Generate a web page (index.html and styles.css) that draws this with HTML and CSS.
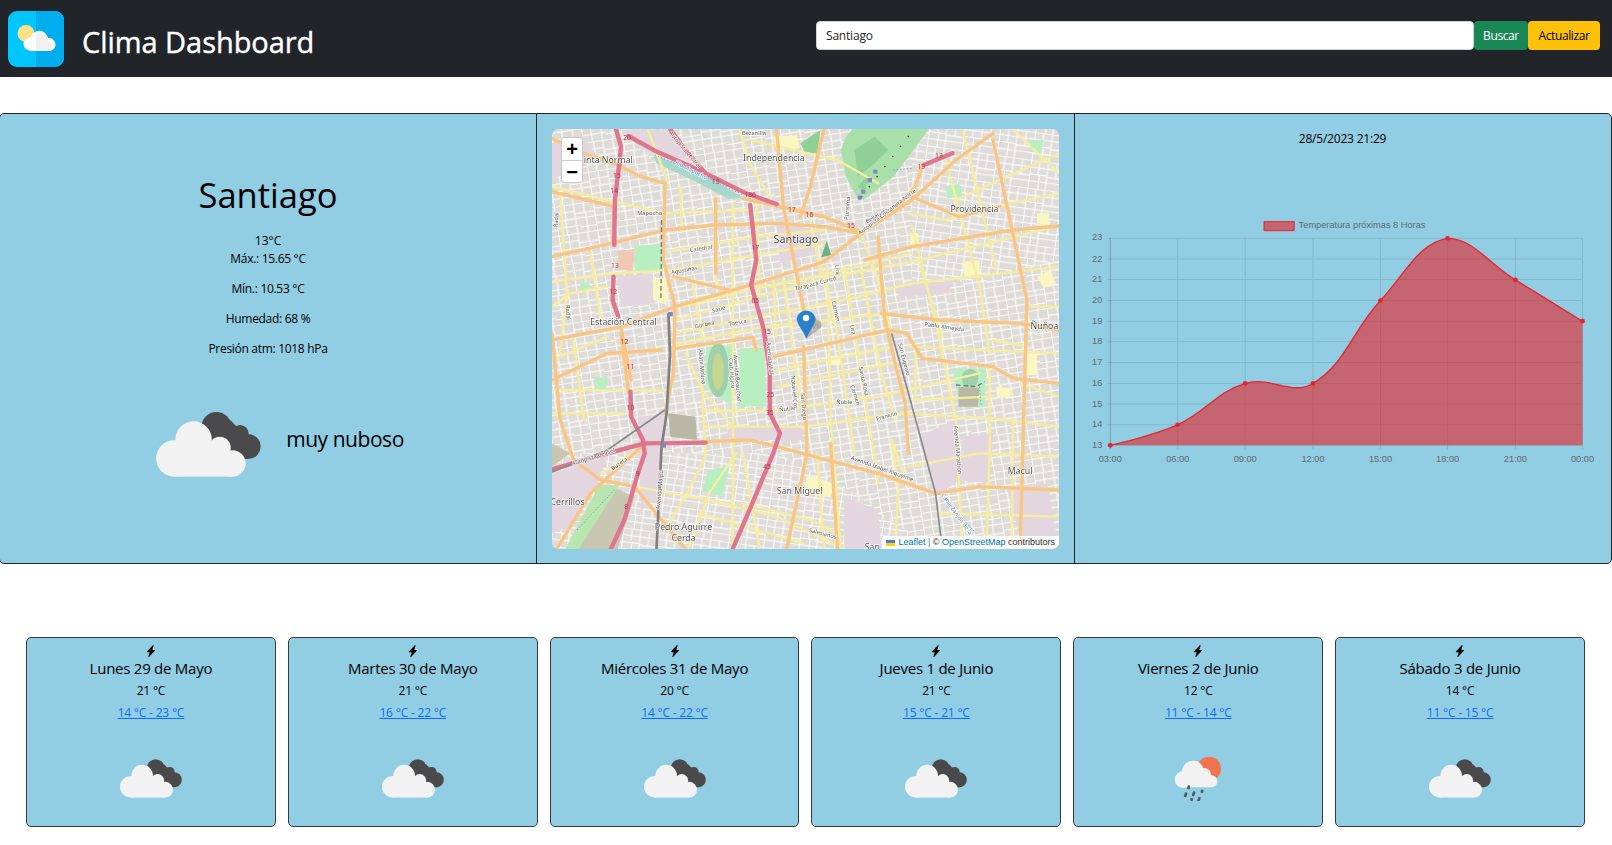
FILE: index.html
```html
<!DOCTYPE html>
<html lang="es">
<head>
<meta charset="utf-8">
<title>Clima Dashboard</title>
<link rel="stylesheet" href="styles.css">
</head>
<body>
<svg class="defs" width="0" height="0" aria-hidden="true">
  <symbol id="clouds" viewBox="170 785 316 196">
    <g class="c-dark">
      <circle cx="352" cy="830" r="45"/><circle cx="423" cy="850" r="26"/><circle cx="447" cy="889" r="38"/>
      <path d="M330 850L395 810L440 860L447 927L360 927Z"/>
    </g>
    <g class="c-light">
      <circle cx="225" cy="925" r="55"/><circle cx="283" cy="868" r="55"/><circle cx="362" cy="893" r="33"/><circle cx="400" cy="940" r="40"/>
      <rect x="225" y="925" width="175" height="55"/><rect x="280" y="880" width="90" height="60"/>
    </g>
  </symbol>
  <symbol id="rain" viewBox="100 72 150 136">
    <circle class="c-sun" cx="208" cy="112" r="36"/>
    <g class="c-light">
      <circle cx="130" cy="145" r="25"/><circle cx="160" cy="121" r="33"/><circle cx="194" cy="130" r="20"/><circle cx="215" cy="150" r="18"/>
      <rect x="130" y="130" width="85" height="38"/>
    </g>
    <g class="c-drop">
      <rect x="143" y="162" width="8" height="12" rx="3" transform="rotate(15 147 168)"/>
      <rect x="134" y="183" width="8" height="15" rx="3" transform="rotate(18 138 190)"/>
      <rect x="158" y="180" width="8" height="15" rx="3" transform="rotate(18 162 187)"/>
      <rect x="183" y="175" width="8" height="10" rx="3" transform="rotate(18 187 180)"/>
      <rect x="152" y="200" width="8" height="9" rx="3"/>
      <rect x="174" y="197" width="8" height="15" rx="3" transform="rotate(18 178 204)"/>
    </g>
  </symbol>
  <symbol id="bolt" viewBox="0 0 16 16">
    <path d="M11.251.068a.5.5 0 0 1 .227.58L9.677 6.5H13a.5.5 0 0 1 .364.843l-8 8.5a.5.5 0 0 1-.842-.49L6.323 9.5H3a.5.5 0 0 1-.364-.843l8-8.5a.5.5 0 0 1 .615-.09z"/>
  </symbol>
</svg>

<header class="navbar">
  <div class="brand">
    <svg class="logo" viewBox="0 0 56 56" aria-hidden="true">
      <rect class="logo-l" width="56" height="56" rx="9"/>
      <path class="logo-r" d="M28 0H47a9 9 0 0 1 9 9V47a9 9 0 0 1-9 9H28Z"/>
      <circle class="logo-sun" cx="18" cy="22.500" r="8.500"/>
      <g class="logo-cloud"><circle cx="22" cy="33" r="6.500"/><circle cx="31" cy="29" r="9"/><circle cx="41" cy="33.500" r="6.500"/><rect x="22" y="30" width="19" height="10"/></g>
      <path class="logo-cloud2" d="M28 20.200A9 9 0 0 1 40 29 6.500 6.500 0 0 1 41 40H28Z"/>
    </svg>
    <h1 class="brand-title">Clima Dashboard</h1>
  </div>
  <form class="search">
    <input class="search-input" type="text" value="Santiago">
    <button class="btn btn-green" type="button">Buscar</button>
    <button class="btn btn-yellow" type="button">Actualizar</button>
  </form>
</header>

<main>
<section class="hero">
  <div class="col col-now">
    <h2 class="city">Santiago</h2>
    <div class="now-line">13°C</div>
    <p class="now-p">Máx.: 15.65 °C</p>
    <p class="now-p">Mín.: 10.53 °C</p>
    <p class="now-p">Humedad: 68 %</p>
    <p class="now-p">Presión atm: 1018 hPa</p>
    <div class="now-sky">
      <svg class="sky-icon" aria-hidden="true"><use href="#clouds"/></svg>
      <span class="sky-text">muy nuboso</span>
    </div>
  </div>

  <div class="col col-map">
    <div class="map">
      <svg class="map-svg" viewBox="36 27 1499 1260" preserveAspectRatio="none" aria-hidden="true">
        <defs>
          <pattern id="st1" width="116" height="88" patternUnits="userSpaceOnUse" patternTransform="rotate(-9)">
            <rect width="116" height="88" fill="#dfdcd8"/>
            <path d="M0 1H116M0 23H58M58 30H116M0 45H116M0 67H70M70 72H116M1 0V88M30 0V45M28 45V88M58 0V88M87 0V30M90 30V88" stroke="#fff" stroke-width="3" fill="none"/>
          </pattern>
          <pattern id="st2" width="104" height="84" patternUnits="userSpaceOnUse" patternTransform="rotate(8)">
            <rect width="104" height="84" fill="#e0dcd9"/>
            <path d="M0 1H104M0 21H104M0 42H52M52 46H104M0 63H104M1 0V84M26 0V42M52 0V84M78 0V46M30 42V84" stroke="#fff" stroke-width="3" fill="none"/>
          </pattern>
        </defs>
        <rect x="36" y="27" width="1499" height="1260" fill="url(#st1)"/>
        <path d="M36 1000H700L900 1100L1160 1287H36Z" fill="url(#st2)"/>
        <path d="M1100 27H1535V420L1100 520Z" fill="url(#st2)"/>

        <g class="lu-lilac">
          <path d="M250 30L390 30L440 120L300 90Z"/><path d="M36 1060L200 1010L170 1090L90 1220L36 1240Z"/>
          <path d="M290 890L370 880L350 1130L300 1170Z"/><path d="M1120 950L1230 900L1240 1080L1170 1130Z"/>
          <path d="M1250 950L1340 940L1330 1090L1240 1080Z"/><path d="M900 1130L1000 1170L1010 1287H900Z"/>
          <path d="M700 310L830 330L820 400L710 430Z"/><path d="M560 920L770 915L780 960L550 960Z"/>
          <path d="M1380 1100L1500 1090L1535 1287H1430Z"/><path d="M36 70L120 40L170 110L36 180Z"/>
          <path d="M1060 500L1230 480L1200 520L1060 530Z"/><path d="M230 470L330 460L340 550L240 560Z"/>
        </g>
        <g class="lu-park">
          <path d="M280 378L362 372L365 450L280 452Z"/><path d="M590 685L663 683L668 858L590 860Z"/>
          <path d="M1222 745L1320 748L1315 860H1240Z"/><path d="M490 680L568 678L566 858L490 800Z"/>
          <path d="M500 1050L560 1040L540 1130L480 1110Z"/><path d="M160 775L200 770L195 810L165 815Z"/>
          <path d="M1200 200L1240 190L1250 230L1205 235Z"/><path d="M1450 60L1490 60L1480 100L1450 95Z"/>
          <path d="M1260 440L1285 440L1280 470L1262 470Z"/><path d="M120 490L145 485L145 510L120 510Z"/>
        </g>
        <path class="lu-forest" d="M890 90L905 50L925 27L1150 27L1090 110L1045 170L960 238L940 235L905 170Z"/>
        <path class="lu-forest2" d="M930 90L990 50L1030 90L990 130L940 170ZM940 200L975 160L960 215ZM770 70L830 30L820 100L785 100Z"/>
        <path class="lu-peach" d="M232 392L280 388L276 452L232 450Z"/>
        <path class="lu-cream" d="M335 470L375 478L376 555L335 540ZM790 1065L870 1092L860 1132L780 1120ZM690 50L760 45L770 85L700 90ZM1250 425L1300 420L1300 470L1255 470ZM1470 470L1510 450L1525 490L1490 505ZM1095 340L1120 340L1118 375L1095 375ZM1470 280L1505 280L1505 315L1470 315ZM860 710L890 710L890 735L860 735ZM1350 800L1395 805L1390 835L1350 830ZM1440 700L1470 700L1470 765L1440 765Z"/>
        <ellipse class="lu-track" cx="527" cy="750" rx="32" ry="82"/>
        <ellipse class="lu-track2" cx="527" cy="755" rx="17" ry="55"/>
        <ellipse class="lu-track" cx="1272" cy="775" rx="25" ry="28"/>
        <path class="lu-grey" d="M1238 800L1300 805L1295 860L1238 860ZM380 880L460 890L465 960L385 950Z"/>
        <path class="lu-tan" d="M36 970L90 1000L36 1040ZM205 1095L280 1130L230 1287H110Z"/>
        <path class="lu-green2" d="M175 1095L235 1095L115 1287L75 1287Z"/>
        <path class="lu-water" d="M335 105L480 160L600 232L560 238L450 180L345 130Z"/>
        <path class="lu-tri" d="M848 362L862 405L832 412Z"/>

        <g class="rd rd-y">
          <path d="M36 485L220 460L380 452L640 405L840 372"/>
          <path d="M400 600L640 530L880 468L1100 425L1535 318"/>
          <path d="M400 640L640 590L900 540L1100 490L1320 465L1535 440"/>
          <path d="M400 672L650 622L1030 580"/>
          <path d="M40 810L370 812"/><path d="M480 872L700 872L1000 830L1300 760"/>
          <path d="M490 920L780 920L1060 880L1340 895L1535 920"/>
          <path d="M280 1100L500 1140L700 1190L900 1287"/><path d="M36 200L200 240L370 280L620 270"/>
          <path d="M380 395L640 350L840 330"/><path d="M1090 1040L1300 1000L1535 1010"/>
          <path d="M1180 1180L1535 1190"/><path d="M36 560L90 520L200 500"/><path d="M620 60L880 120L1000 190"/>
          <path d="M590 27L620 130L680 230"/><path d="M520 230L520 480L545 520"/><path d="M570 250L572 1000L570 1287"/>
          <path d="M415 200L420 330"/><path d="M60 220L80 520L60 700"/><path d="M850 440L860 900L890 1287"/>
          <path d="M900 440L980 950L1000 1090"/><path d="M720 480L750 700L780 900"/><path d="M1100 320L1170 600L1230 900L1250 1287"/>
          <path d="M1330 740L1330 1000L1320 1287"/><path d="M1200 120L1300 500L1330 700"/><path d="M430 700L480 810L570 920"/>
          <path d="M480 800L490 1010L430 1130L370 1230"/><path d="M580 1000L500 1120L440 1287"/><path d="M1040 960L1060 1100L1050 1287"/>
          <path d="M950 340L1000 480L1040 640"/><path d="M1535 830L1420 790"/><path d="M1090 1100L1040 960"/>
          <path d="M640 240L650 530"/><path d="M800 300L830 460"/><path d="M320 30L380 190"/><path d="M180 1060L290 990"/>
          <path d="M600 1150L800 1200L880 1240"/><path d="M1110 700L1110 830"/><path d="M1400 30L1535 160"/>
          <path d="M1090 280L1200 300L1390 250L1535 220"/><path d="M1535 100L1380 170L1230 240"/>
          <path d="M680 500L900 450L1100 400"/><path d="M420 560L640 505L800 470"/><path d="M700 750L1000 690L1040 680"/>
          <path d="M700 800L1040 730"/><path d="M1090 680L1535 700"/><path d="M1100 840L1340 830"/>
          <path d="M36 720L200 650"/><path d="M36 880L250 880"/><path d="M830 430L880 640L930 1000"/>
          <path d="M950 450L1010 760L1050 900"/><path d="M690 470L700 650"/><path d="M450 480L480 660"/>
          <path d="M1250 30L1350 450"/><path d="M1120 420L1190 650"/><path d="M1400 900L1395 1287"/>
          <path d="M600 1000L650 1287"/><path d="M820 1000L840 1287"/><path d="M470 1180L780 1270"/>
          <path d="M1450 560L1535 560"/><path d="M1340 660L1440 680"/><path d="M100 660L130 900"/><path d="M150 400L180 600"/>
        </g>
        <g class="rd rd-o">
          <path d="M36 660L240 620L400 560L640 490L840 425L950 340L1100 240L1230 120L1340 40"/>
          <path d="M36 410L210 370L370 330L520 315L700 310L840 320L950 340"/>
          <path d="M36 215L220 260"/><path d="M370 190L365 420L400 560L395 760L370 880"/>
          <path d="M220 260L215 370"/><path d="M240 620L270 780"/><path d="M36 780L200 700L360 690"/>
          <path d="M400 685L630 652L640 690"/><path d="M690 710L1030 630L1085 640L1130 715L1340 740L1400 775L1535 790"/>
          <path d="M1010 580L1180 600L1420 610L1535 630"/><path d="M960 420L1100 380L1400 330L1535 318"/>
          <path d="M700 27L720 260L790 620"/><path d="M840 27L800 200L770 290"/><path d="M780 680L790 1000L730 1287"/>
          <path d="M1000 350L1020 600L1080 850L1090 1000"/><path d="M1340 60L1440 540L1420 1287"/>
          <path d="M700 980L1000 1060L1170 1120L1300 1100L1535 1110"/><path d="M480 965L620 960L700 980"/>
          <path d="M36 640L60 900L100 1020L180 1080L280 1100L430 1287"/><path d="M300 980L150 1120L50 1287"/>
          <path d="M860 970L880 1287"/><path d="M1100 230L1240 290L1360 260"/>
          <path d="M520 235L520 460"/><path d="M395 470L560 510"/><path d="M600 235L840 290L950 335"/>
          <path d="M36 55L100 90L220 130L300 170L370 190"/><path d="M240 640L262 815"/>
          <path d="M1130 140L1110 200L1040 280L960 330"/>
        </g>
        <g class="rd rd-p">
          <path d="M225 27L240 80L235 130L222 240L220 375"/><path d="M218 470L215 540L232 590"/>
          <path d="M268 815L270 890L305 960L310 1000L290 1060L250 1200L210 1287"/>
          <path d="M262 48L340 92L470 150L610 220L700 252"/><path d="M385 27L430 90L490 160"/>
          <path d="M622 255L640 420L625 495L660 620L680 750L680 880L710 940L690 1000L620 1170L570 1287"/>
          <path d="M36 1048L200 1000L310 970L490 968"/><path d="M1135 135L1220 100"/>
        </g>
        <path class="rail" d="M380 580L385 700L375 880L360 980L345 1287"/>
        <path class="rail2" d="M1040 640L1090 820L1170 1120L1190 1287"/>
        <path class="rail2" d="M36 1056L200 990L370 870"/>
        <path class="rail3" d="M360 300L358 540"/><path class="rail3" d="M1230 795L1290 800L1315 785"/><path class="rail-d" d="M950 232L1100 35"/>
        <path class="water-line" d="M340 105L480 165L600 225M1045 150L1100 145M1300 800L1305 860M1180 1120L1290 1240M110 1230L220 1110"/>
        <g class="station"><rect x="940" y="227" width="12" height="12"/><rect x="950" y="209" width="12" height="12"/><rect x="969" y="174" width="13" height="13"/><rect x="986" y="149" width="12" height="12"/><rect x="380" y="576" width="13" height="13"/><rect x="360" y="970" width="13" height="13"/></g>

        <g class="lb lb-place">
          <text x="130" y="129">inta Normal</text><text x="692" y="122" class="mid">Independencia</text><text x="1285" y="277" class="mid">Providencia</text>
          <text x="247" y="614" class="mid">Estación Central</text><text x="1492" y="626" class="mid">Ñuñoa</text><text x="768" y="1122" class="mid">San Miguel</text>
          <text x="1420" y="1062" class="mid">Macul</text><text x="82" y="1155" class="mid">Cerrillos</text><text x="425" y="1229" class="mid">Pedro Aguirre</text>
          <text x="425" y="1264" class="mid">Cerda</text><text x="983" y="1290" class="mid">San</text>
          <text x="757" y="368" class="mid lb-big">Santiago</text>
        </g>
        <g class="lb lb-road">
          <text x="633" y="46" class="mid">Bezanilla</text><text x="325" y="286" class="mid">Mapocho</text>
          <text transform="translate(477 391) rotate(-8)" class="mid">Catedral</text><text transform="translate(428 456) rotate(-10)" class="mid">Agustinas</text>
          <text transform="translate(530 573) rotate(-15)" class="mid">Sazie</text><text transform="translate(488 619) rotate(-12)" class="mid">Gorbea</text>
          <text transform="translate(586 613) rotate(-10)" class="mid">Toesca</text><text transform="translate(817 496) rotate(-15)" class="mid">Tarapacá Curicó</text>
          <text transform="translate(875 450) rotate(85)" class="mid">Lira</text><text transform="translate(870 575) rotate(78)" class="mid">Carmen</text>
          <text transform="translate(920 630) rotate(80)" class="mid">Lira</text><text transform="translate(952 785) rotate(78)" class="mid">Santa Rosa</text>
          <text transform="translate(927 827) rotate(72)" class="mid">Carmen</text><text transform="translate(1072 720) rotate(75)" class="mid">San Eugenio</text>
          <text transform="translate(675 715) rotate(85)" class="mid">Avenida Vial</text><text transform="translate(747 817) rotate(85)" class="mid">Nataniel Cox</text>
          <text transform="translate(775 860) rotate(85)" class="mid">San Diego</text><text transform="translate(732 872) rotate(-8)" class="mid">Ñuble</text>
          <text x="900" y="852" class="mid">Ñuble</text><text transform="translate(1027 894) rotate(-15)" class="mid">Franklin</text>
          <text transform="translate(1195 626) rotate(8)" class="mid">Pablo Almeyda</text><text transform="translate(1010 1051) rotate(20)" class="mid">Avenida Isabel Riquelme</text>
          <text transform="translate(1230 990) rotate(85)" class="mid">Avenida Marathon</text><text transform="translate(160 1016) rotate(-18)" class="mid">Autopista del Sol</text>
          <text transform="translate(238 1036) rotate(-35)" class="mid">Buzeta</text><text transform="translate(360 1110) rotate(-85)" class="mid">Avenida Maipú</text>
          <text transform="translate(562 760) rotate(85)" class="mid">Club Hípico</text><text transform="translate(578 775) rotate(85)" class="mid">Avenida Beauchef</text>
          <text transform="translate(474 740) rotate(85)" class="mid">Abate Molina</text><text transform="translate(835 1246) rotate(15)" class="mid">Salesianos</text>
          <text transform="translate(915 265) rotate(-85)" class="mid">Purísima</text><text transform="translate(1000 292) rotate(-30)" class="mid">Bellavista</text>
          <text transform="translate(1030 280) rotate(-38)" class="mid">Autopista Costanera Norte</text><text transform="translate(54 300) rotate(-85)" class="mid">Radal</text>
          <text transform="translate(78 578) rotate(85)" class="mid">Radal</text><text transform="translate(425 92) rotate(50)" class="mid lb-pk">Autopista Central</text>
          <text transform="translate(445 155) rotate(27)" class="mid lb-blue">Río Mapocho</text><text transform="translate(1228 1185) rotate(55)" class="mid lb-blue">Canal Zanjón de la</text>
        </g>
        <g class="lb lb-num">
          <text x="258" y="60">20</text><text x="228" y="175">15</text><text x="220" y="218">14</text><text x="222" y="443">13</text><text x="217" y="521">12</text>
          <text x="250" y="671">12</text><text x="268" y="746">11</text><text x="268" y="871">10</text><text x="290" y="1069">9</text><text x="255" y="1166">8</text>
          <text x="520" y="191">19</text><text x="622" y="231">186</text><text x="745" y="276">17</text><text x="797" y="291">16</text><text x="920" y="324">15</text>
          <text x="1180" y="114">13</text><text x="1128" y="146">13</text><text x="637" y="391">17</text><text x="637" y="549">05</text><text x="672" y="643">15</text>
          <text x="682" y="831">25</text><text x="680" y="886">35</text><text x="672" y="1046">45</text>
        </g>
        <path class="pin-shadow" d="M788 655L830 625A16 14 0 0 0 800 605Z"/>
        <path class="pin" d="M788 655C775 625 760 612 760 595A28 28 0 0 1 815 595C815 612 800 625 788 655Z"/>
        <circle class="pin-dot" cx="787" cy="594" r="9.500"/>
      </svg>
      <div class="zoomctl">
        <span class="zoom-btn zoom-top">+</span>
        <span class="zoom-btn">−</span>
      </div>
      <div class="attrib">
        <svg class="flag" viewBox="0 0 12 8" aria-hidden="true"><rect class="flag-b" width="12" height="4"/><rect class="flag-y" y="4" width="12" height="4"/></svg>
        <a class="attr-link" href="#">Leaflet</a> <span class="attr-sep">|</span> © <a class="attr-link" href="#">OpenStreetMap</a> contributors
      </div>
    </div>
  </div>

  <div class="col col-chart">
    <div class="stamp">28/5/2023 21:29</div>
    <svg class="chart" viewBox="0 290 1568 760" preserveAspectRatio="none" role="img" aria-label="Temperatura próximas 8 Horas">
      <rect class="legend-box" x="552" y="304" width="88" height="27"/>
      <text class="ch-text" x="653" y="324">Temperatura próximas 8 Horas</text>
      <path class="grid" d="M94 976H1482M94 914H1482M94 852H1482M94 790H1482M94 727H1482M94 665H1482M94 603H1482M94 541H1482M94 478H1482M94 416H1482M94 354H1482M300 354V988M497 354V988M695 354V988M892 354V988M1088 354V988M1286 354V988M1482 354V988"/>
      <path class="grid-zero" d="M103 354V988"/>
      <path class="area" d="M103 976C103 976 226 949 300 914C383.500 874.600 411.700 816.800 497 790C569.700 767.200 634.200 828.300 695 790C792.200 728.700 807.100 635.200 892 541C964.300 460.800 1003.500 367.300 1088 354C1161 354 1207 429 1286 479C1365 529 1482 603 1482 603V976Z"/>
      <path class="line" d="M103 976C103 976 226 949 300 914C383.500 874.600 411.700 816.800 497 790C569.700 767.200 634.200 828.300 695 790C792.200 728.700 807.100 635.200 892 541C964.300 460.800 1003.500 367.300 1088 354C1161 354 1207 429 1286 479C1365 529 1482 603 1482 603"/>
      <g class="pts"><circle cx="103" cy="976" r="7"/><circle cx="300" cy="914" r="7"/><circle cx="497" cy="790" r="7"/><circle cx="695" cy="790" r="7"/><circle cx="892" cy="541" r="7"/><circle cx="1088" cy="354" r="7"/><circle cx="1286" cy="479" r="7"/><circle cx="1482" cy="603" r="7"/></g>
      <g class="ch-text ch-y">
        <text x="80" y="984">13</text><text x="80" y="922">14</text><text x="80" y="860">15</text><text x="80" y="798">16</text><text x="80" y="735">17</text><text x="80" y="673">18</text><text x="80" y="611">19</text><text x="80" y="549">20</text><text x="80" y="486">21</text><text x="80" y="424">22</text><text x="80" y="360">23</text>
      </g>
      <g class="ch-text ch-x">
        <text x="103" y="1025">03:00</text><text x="300" y="1025">06:00</text><text x="497" y="1025">09:00</text><text x="695" y="1025">12:00</text><text x="892" y="1025">15:00</text><text x="1088" y="1025">18:00</text><text x="1286" y="1025">21:00</text><text x="1482" y="1025">00:00</text>
      </g>
    </svg>
  </div>
</section>

<section class="days">
  <article class="day">
    <svg class="bolt" aria-hidden="true"><use href="#bolt"/></svg>
    <h3 class="day-title">Lunes 29 de Mayo</h3>
    <p class="day-temp">21 °C</p>
    <a class="day-range" href="#">14 °C - 23 °C</a>
    <div class="day-icon"><svg class="ic-cloud" aria-hidden="true"><use href="#clouds"/></svg></div>
  </article>
  <article class="day">
    <svg class="bolt" aria-hidden="true"><use href="#bolt"/></svg>
    <h3 class="day-title">Martes 30 de Mayo</h3>
    <p class="day-temp">21 °C</p>
    <a class="day-range" href="#">16 °C - 22 °C</a>
    <div class="day-icon"><svg class="ic-cloud" aria-hidden="true"><use href="#clouds"/></svg></div>
  </article>
  <article class="day">
    <svg class="bolt" aria-hidden="true"><use href="#bolt"/></svg>
    <h3 class="day-title">Miércoles 31 de Mayo</h3>
    <p class="day-temp">20 °C</p>
    <a class="day-range" href="#">14 °C - 22 °C</a>
    <div class="day-icon"><svg class="ic-cloud" aria-hidden="true"><use href="#clouds"/></svg></div>
  </article>
  <article class="day">
    <svg class="bolt" aria-hidden="true"><use href="#bolt"/></svg>
    <h3 class="day-title">Jueves 1 de Junio</h3>
    <p class="day-temp">21 °C</p>
    <a class="day-range" href="#">15 °C - 21 °C</a>
    <div class="day-icon"><svg class="ic-cloud" aria-hidden="true"><use href="#clouds"/></svg></div>
  </article>
  <article class="day">
    <svg class="bolt" aria-hidden="true"><use href="#bolt"/></svg>
    <h3 class="day-title">Viernes 2 de Junio</h3>
    <p class="day-temp">12 °C</p>
    <a class="day-range" href="#">11 °C - 14 °C</a>
    <div class="day-icon"><svg class="ic-rain" aria-hidden="true"><use href="#rain"/></svg></div>
  </article>
  <article class="day">
    <svg class="bolt" aria-hidden="true"><use href="#bolt"/></svg>
    <h3 class="day-title">Sábado 3 de Junio</h3>
    <p class="day-temp">14 °C</p>
    <a class="day-range" href="#">11 °C - 15 °C</a>
    <div class="day-icon"><svg class="ic-cloud" aria-hidden="true"><use href="#clouds"/></svg></div>
  </article>
</section>
</main>
</body>
</html>
```

FILE: styles.css
```css
* { box-sizing: border-box; }
html, body { margin: 0; padding: 0; }
body {
  height: 845px;
  overflow: hidden;
  background: #fff;
  color: #000;
  font-family: "Open Sans", "Noto Sans", sans-serif;
  font-size: 12px;
  line-height: 18px;
}
.defs { position: absolute; }

/* navbar */
.navbar {
  height: 77px;
  background: #212529;
  display: flex;
  align-items: center;
  justify-content: space-between;
  padding: 0 12px 0 8px;
}
.brand { display: flex; align-items: center; gap: 18px; }
.logo { width: 56px; height: 56px; display: block; }
.logo-l { fill: #00c6ff; }
.logo-r { fill: #00aef0; }
.logo-sun { fill: #ffe082; }
.logo-cloud { fill: #fff; }
.logo-cloud2 { fill: #f0f0f0; }
.brand-title {
  margin: 6px 0 0;
  color: #fff;
  font-size: 29px;
  line-height: 36px;
  font-weight: 500;
  letter-spacing: -0.05px;
  -webkit-text-stroke: 0.4px #fff;
}
.search { display: flex; align-items: center; width: 784px; height: 29px; margin-bottom: 6px; }
.search-input {
  flex: 1;
  min-width: 0;
  height: 29px;
  padding: 0 9px;
  border: 1px solid #ced4da;
  border-radius: 4px;
  background: #fff;
  color: #212529;
  font: 12px "Open Sans", sans-serif;
  letter-spacing: -0.2px;
}
.btn {
  height: 29px;
  padding: 0;
  border: 1px solid transparent;
  border-radius: 4px;
  font: 12px "Open Sans", sans-serif;
  letter-spacing: -0.4px;
}
.btn-green { background: #198754; color: #fff; width: 54px; }
.btn-yellow { background: #ffc107; color: #000; width: 72px; }

/* hero row */
.hero {
  margin: 36px 0 0 -1px;
  height: 451px;
  display: grid;
  grid-template-columns: 536px 538px 1fr;
  border: 1px solid #212529;
  border-radius: 5px;
  background: #91cde3;
  overflow: hidden;
}
.col { min-width: 0; }
.col-map, .col-chart { border-left: 1px solid #212529; }

.col-now { padding-top: 60px; text-align: center; }
.city {
  margin: 0 0 17px;
  font-size: 34.500px;
  line-height: 41px;
  font-weight: 400;
}
.now-line { height: 18px; }
.now-p { margin: 0 0 12px; letter-spacing: -0.3px; }
.now-sky {
  margin-top: 48px;
  display: flex;
  align-items: flex-start;
  justify-content: center;
  gap: 25px;
  padding-left: 24px;
}
.sky-icon { width: 105px; height: 65px; display: block; margin-top: 6px; }
.sky-text { font-size: 21px; line-height: 30px; letter-spacing: -0.45px; margin-top: 18px; }
.c-dark { fill: #4a4a4d; }
.c-light { fill: #f2f2f2; }
.c-sun { fill: #f4734f; }
.c-drop { fill: #4f5a62; }

/* map */
.col-map { padding: 15px 15px 0; }
.map {
  position: relative;
  width: 507px;
  height: 420px;
  border-radius: 7px;
  overflow: hidden;
  background: #ddd;
}
.map-svg { width: 507px; height: 420px; display: block; filter: blur(0.35px); }
.lu-lilac path { fill: #e3d6de; }
.lu-park path { fill: #b8efc0; }
.lu-forest { fill: #a9dfa9; }
.lu-forest2 { fill: #8fd097; }
.lu-peach { fill: #efc9b4; }
.lu-cream { fill: #f9f6c2; }
.lu-track { fill: #9fd0ae; }
.lu-track2 { fill: #c3d78d; }
.lu-grey { fill: #b9b8a6; }
.lu-tan { fill: #c9c7b2; }
.lu-green2 { fill: #b9e5b0; }
.lu-water { fill: #a9d8cb; }
.lu-tri { fill: #6fb27b; }
.rd path { fill: none; stroke-linejoin: round; stroke-linecap: round; }
.rd-y path { stroke: #f6ee9d; stroke-width: 7; }
.rd-o path { stroke: #f9c582; stroke-width: 10; }
.rd-p path { stroke: #e0768e; stroke-width: 13; }
.rail { fill: none; stroke: #808080; stroke-width: 8; }
.rail2 { fill: none; stroke: #8a8a8e; stroke-width: 5; }
.rail3 { fill: none; stroke: #777; stroke-width: 4; stroke-dasharray: 14 8; }
.rail-d { fill: none; stroke: #222; stroke-width: 4; stroke-dasharray: 4 34; }
.water-line { fill: none; stroke: #5f8fe0; stroke-width: 2.500; stroke-dasharray: 4 6; }
.station rect { fill: #7f86c2; }
.lb text {
  font-family: "Noto Sans", "Open Sans", sans-serif;
  paint-order: stroke;
  stroke: rgba(255, 255, 255, 0.85);
  stroke-width: 4px;
  stroke-linejoin: round;
}
.lb-place text { font-size: 26px; fill: #555; }
.lb-place text.lb-big { font-size: 32px; fill: #444; }
.lb-road text { font-size: 17px; fill: #5a5a5a; }
.lb-road text.lb-pk { fill: #8a3a4c; }
.lb-road text.lb-blue { fill: #5b86c9; }
.lb-num text { font-size: 20px; fill: #b3334f; text-anchor: middle; stroke: none; }
.lb .mid { text-anchor: middle; }
.pin { fill: #2a81cb; stroke: #2168a6; stroke-width: 1; }
.pin-dot { fill: #fff; }
.pin-shadow { fill: rgba(60, 60, 60, 0.3); }

.zoomctl {
  position: absolute;
  top: 8px;
  left: 9px;
  width: 22px;
  height: 46px;
  background: #fff;
  border: 1px solid #c9c9c9;
  border-radius: 3px;
  display: flex;
  flex-direction: column;
  font: bold 20px/22px "Liberation Sans", sans-serif;
  color: #000;
  text-align: center;
}
.zoom-btn { height: 22px; display: block; }
.zoom-top { border-bottom: 1px solid #ccc; height: 23px; }
.attrib {
  position: absolute;
  right: 0;
  bottom: 0;
  height: 13px;
  padding: 0 4px;
  background: rgba(255, 255, 255, 0.85);
  color: #333;
  font: 9px/13px "Liberation Sans", sans-serif;
  white-space: nowrap;
  border-top-left-radius: 3px;
}
.flag { width: 9px; height: 6px; margin-right: 1px; vertical-align: -0.5px; }
.flag-b { fill: #4c7be1; }
.flag-y { fill: #ffd500; }
.attr-link { color: #0078a8; text-decoration: none; }
.attr-sep { color: #777; }

/* chart */
.col-chart { padding-top: 16px; }
.stamp { text-align: center; height: 18px; margin-right: 1px; letter-spacing: -0.2px; }
.chart { display: block; width: 537px; height: 253px; margin-top: 69px; }
.legend-box { fill: #c56570; stroke: #e8202a; stroke-width: 3; }
.ch-text, .ch-text text {
  font-family: "Liberation Sans", Arial, sans-serif;
  font-size: 27px;
  fill: #5f6b72;
}
.ch-y text { text-anchor: end; }
.ch-x text { text-anchor: middle; }
.grid { fill: none; stroke: rgba(0, 0, 0, 0.1); stroke-width: 3; }
.grid-zero { fill: none; stroke: rgba(0, 0, 0, 0.22); stroke-width: 3; }
.area { fill: rgba(232, 32, 36, 0.6); }
.line { fill: none; stroke: #e8252f; stroke-width: 4; }
.pts circle { fill: #e8202f; }

/* forecast cards */
.days {
  margin: 73px 27px 0 26px;
  display: grid;
  grid-template-columns: repeat(6, 1fr);
  gap: 12px;
}
.day {
  height: 190px;
  background: #91cde3;
  border: 1px solid #343a40;
  border-radius: 5px;
  padding-top: 7px;
  text-align: center;
}
.bolt { width: 12px; height: 12px; display: block; margin: 0 auto; fill: #000; }
.day-title { margin: 0; font-size: 15px; line-height: 23px; font-weight: 400; letter-spacing: -0.25px; }
.day-temp { margin: 2px 0 0; height: 18px; letter-spacing: -0.2px; }
.day-range { display: inline-block; margin-top: 4px; color: #0d6efd; letter-spacing: -0.2px; }
.day-icon { margin-top: 32px; height: 48px; display: flex; align-items: center; justify-content: center; }
.ic-cloud { width: 62px; height: 39px; display: block; }
.ic-rain { width: 50px; height: 46px; display: block; }
```
